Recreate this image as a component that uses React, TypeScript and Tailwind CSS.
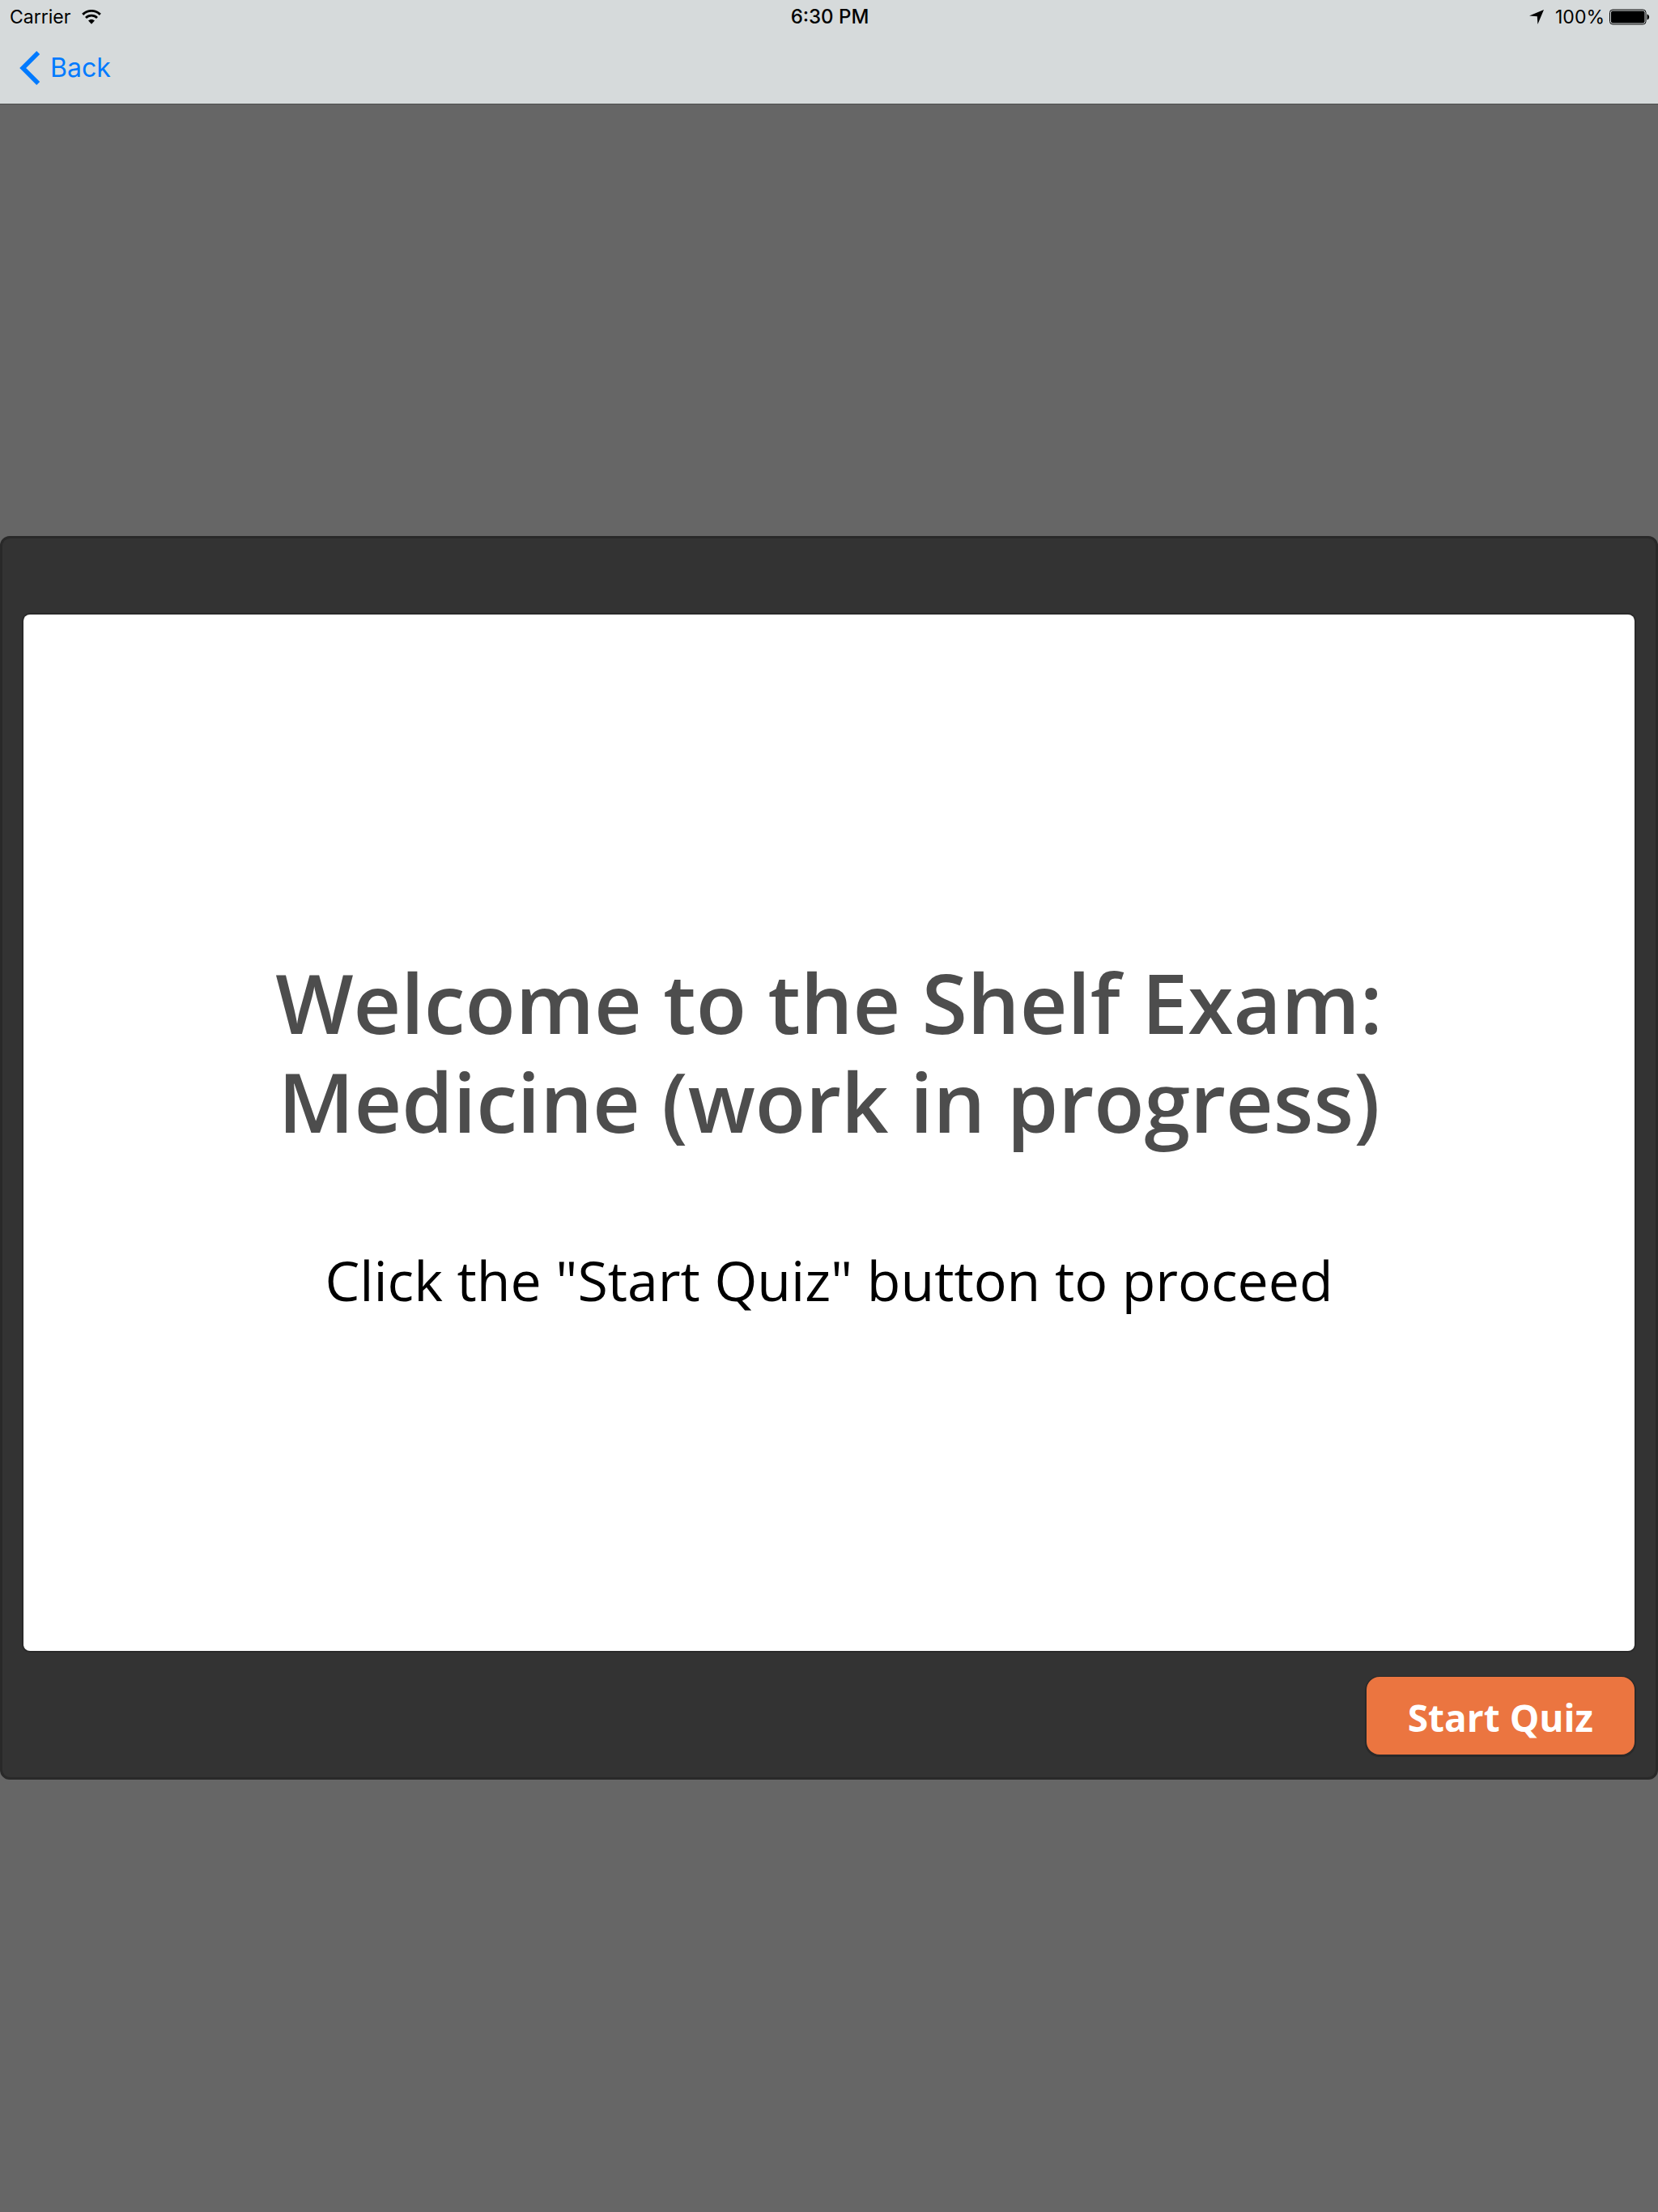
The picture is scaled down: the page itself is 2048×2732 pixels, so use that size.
function WifiIcon() {
  return (
    <svg className="w-6 h-[18px]" viewBox="0 0 24 18" fill="none" aria-hidden="true">
      <path d="M1.2 5.9C7.2-.1 16.8-.1 22.8 5.9" stroke="#000" strokeWidth="2.9" />
      <path d="M5 10C8.900 6.100 15.100 6.100 19 10" stroke="#000" strokeWidth="2.7" />
      <path d="M8 13.600C10.300 11.300 13.700 11.300 16 13.600L12 17.700Z" fill="#000" />
    </svg>
  );
}

function LocationIcon() {
  return (
    <svg className="w-[18px] h-[18px]" viewBox="0 0 18 18" aria-hidden="true">
      <path d="M18 0L10.400 18L9.800 8.200L0 7.600Z" fill="#000" />
    </svg>
  );
}

function BatteryIcon() {
  return (
    <svg className="w-[50px] h-5" viewBox="0 0 50 20" aria-hidden="true">
      <rect x="0.5" y="1" width="44.500" height="18" rx="3.500" fill="none" stroke="#000" />
      <rect x="2" y="2.500" width="41.500" height="15" rx="2" fill="#000" />
      <path d="M46.500 6.500C50 7.500 50 12.500 46.500 13.500Z" fill="#000" />
    </svg>
  );
}

function BackIcon() {
  return (
    <svg className="w-[26px] h-[42px]" viewBox="0 0 26 42" fill="none" aria-hidden="true">
      <path d="M23.200 2L4.200 21L23.200 40" stroke="#007aff" strokeWidth="5.600" />
    </svg>
  );
}

export default function App() {
  return (
    <div className="flex min-h-screen flex-col bg-[#666666] font-['Open_Sans',sans-serif]">
      <header className="bg-[#d6dadb] font-['Inter',sans-serif] text-black shadow-[0_1px_0_#4d4d4d]">
        <div className="grid h-10 grid-cols-3 items-center pt-0.5 pl-3 pr-2.5 text-[23px]">
          <div className="flex items-center gap-3.5">
            <span>Carrier</span>
            <WifiIcon />
          </div>
          <time className="text-center text-2xl font-medium">6:30 PM</time>
          <div className="flex items-center justify-end">
            <LocationIcon />
            <span className="ml-3.5 mr-1.5">100%</span>
            <BatteryIcon />
          </div>
        </div>
        <nav className="flex h-22 items-center px-6">
          <button type="button" className="flex items-center gap-3 text-[32px] text-[#007aff]">
            <BackIcon />
            Back
          </button>
        </nav>
      </header>

      <main className="flex flex-1 flex-col justify-center">
        <section className="rounded-xl border-[3px] border-[#292929] bg-[#333333] px-[26px] pt-[94px] pb-7">
          <div className="flex aspect-[14/9] flex-col items-center justify-center rounded-lg bg-white pt-1.5 text-center shadow-[0_0_0_2px_#292929]">
            <h1 className="max-w-[1500px] text-[102px] leading-[122px] font-semibold text-[#4d4d4d]">
              Welcome to the Shelf Exam: Medicine (work in progress)
            </h1>
            <p className="mt-[114px] text-[68px] leading-[92px] text-black">Click the "Start Quiz" button to proceed</p>
          </div>
          <div className="mt-8 flex justify-end">
            <button
              type="button"
              className="h-24 rounded-2xl bg-[#eb7540] px-[51px] pt-1.5 text-[46px] font-bold text-white shadow-[0_1px_0_2px_#292929]"
            >
              Start Quiz
            </button>
          </div>
        </section>
      </main>
    </div>
  );
}
